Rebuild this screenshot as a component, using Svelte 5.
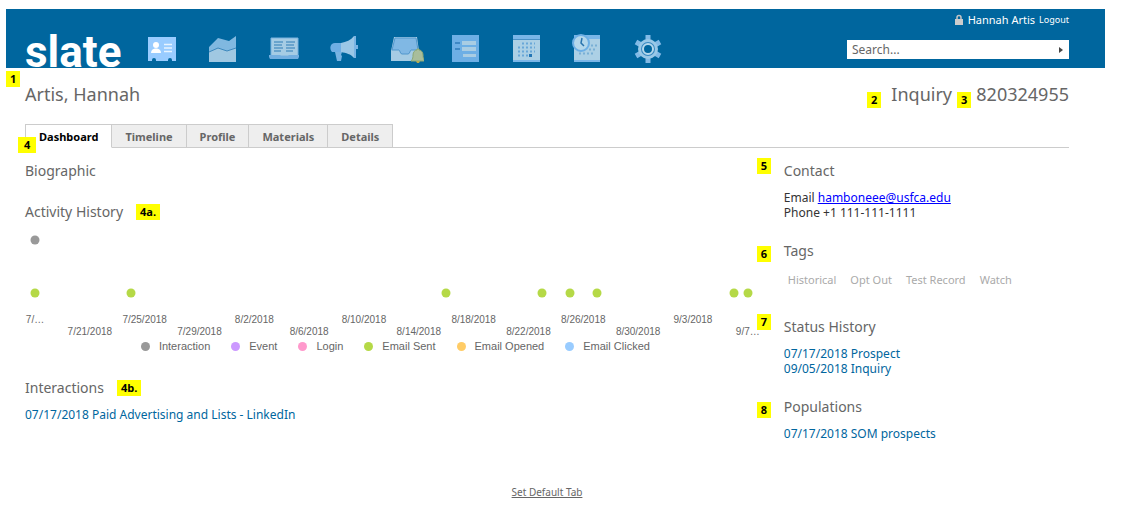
<script lang="ts">
    type Point = {
        day: number;
        color: string;
        row: "upper" | "lower";
    };

    const tabs = ["Dashboard", "Timeline", "Profile", "Materials", "Details"];
    let activeTab = $state("Dashboard");
    let query = $state("");

    // Days are counted from 7/17/2018, the left end of the time axis.
    const lastDay = 52;

    const points: Point[] = [
        { day: 0, color: "#999999", row: "upper" },
        ...[0, 7, 30, 37, 39, 41, 51, 52].map((day) => ({
            day,
            color: "#b5d947",
            row: "lower" as const,
        })),
    ];

    const ticks = [
        "7/…", "7/21/2018", "7/25/2018", "7/29/2018", "8/2/2018",
        "8/6/2018", "8/10/2018", "8/14/2018", "8/18/2018", "8/22/2018",
        "8/26/2018", "8/30/2018", "9/3/2018", "9/7…",
    ];

    const legend = [
        { name: "Interaction", color: "#999999" },
        { name: "Event", color: "#cc99ff" },
        { name: "Login", color: "#ff99cc" },
        { name: "Email Sent", color: "#b5d947" },
        { name: "Email Opened", color: "#ffcc66" },
        { name: "Email Clicked", color: "#99ccff" },
    ];

    const tags = ["Historical", "Opt Out", "Test Record", "Watch"];

    function dayLeft(day: number) {
        return (day / lastDay) * 100;
    }
</script>

<div class="page">
    <header>
        <a class="logo" href="#home">slate</a>
        <nav class="icons" aria-label="Modules">
            <a href="#records" aria-label="Records">
                <svg viewBox="0 0 36 36">
                    <path d="M4 7h28v24h-4v-1a2 2 0 0 0-4 0v1H12v-1a2 2 0 0 0-4 0v1H4z" fill="#99ccff" />
                    <circle cx="12" cy="15" r="3" fill="#fff" />
                    <path d="M7 23c0-3 2-4 4-4.500h2c2 .5 4 1.500 4 4.500z" fill="#fff" />
                    <path d="M20 14.500h8M20 18h8M20 21.500h8" stroke="#e8f4ff" stroke-width="1.500" />
                </svg>
            </a>
            <a href="#reports" aria-label="Reports">
                <svg viewBox="0 0 36 36">
                    <path d="M4 17l9-9 11 3 7-5v26H4z" fill="#80b8e0" />
                    <path d="M4 22l9-4 9 3 9-3v14H4z" fill="#a0c8e2" />
                    <path d="M4 22l9-4 9 3 9-3" fill="none" stroke="#3d88bd" />
                </svg>
            </a>
            <a href="#reader" aria-label="Reader">
                <svg viewBox="0 0 36 36">
                    <path d="M5 8h27v18H5z" fill="#a5cce4" stroke="#79b2df" />
                    <path d="M8 12h9M8 15h8M8 18h9M8 21h7M20 12h9M20 15h8M20 18h9M20 21h7" stroke="#2f7db5" />
                    <path d="M3 25h11l1 1h7l1-1h10v2l-1 2H4l-1-2z" fill="#73afe0" />
                </svg>
            </a>
            <a href="#deliver" aria-label="Deliver">
                <svg viewBox="0 0 36 36">
                    <path d="M14 13c5-1 10-3 13-7h2v22h-2c-3-4-8-5-13-6z" fill="#9bc7e6" />
                    <path d="M28 6v22M30 15v4" stroke="#7ab4e4" stroke-width="2" />
                    <path d="M14 13H8c-5 0-6 6-3 9h9z" fill="#6faee4" />
                    <path d="M8 22h7l-1 3 1 1-1 5h-4z" fill="#78b3e2" />
                </svg>
            </a>
            <a href="#inbox" aria-label="Inbox">
                <svg viewBox="0 0 36 36">
                    <path d="M6 7h23l2 14v10H3V21z" fill="#a5cce4" />
                    <path d="M7 8h21l2 12h-7c-1 0-1 4-3 4h-6c-2 0-2-4-3-4H4z" fill="#80b8e4" stroke="#5197cc" />
                    <path d="M23 31c2-2 2-4 2-6 0-3 2-5 4-5v-1h2v1c2 0 4 2 4 5 0 2 0 4 2 6z" fill="#a8bd9b" stroke="#8da875" />
                    <path d="M28 31h4l-1 2h-2z" fill="#b4ad50" />
                </svg>
            </a>
            <a href="#forms" aria-label="Forms">
                <svg viewBox="0 0 36 36">
                    <path d="M3 5h27v27H3z" fill="#6dafe5" />
                    <path d="M6 13h5M6 19h5" stroke="#2e7cba" stroke-width="1.500" />
                    <path d="M13 11h14v4H13zM13 17h14v4H13zM14 24h13v3H14z" fill="#a9cde3" />
                </svg>
            </a>
            <a href="#events" aria-label="Events">
                <svg viewBox="0 0 36 36">
                    <path d="M3 5h27v27H3z" fill="#acd0e5" />
                    <path d="M3 5h27v5H3zM3 30h27v2H3z" fill="#79b6e8" />
                    <path d="M3 9.500h27" stroke="#4a92c7" />
                    <path d="M12 13.500h13M8 17.500h17M8 21.500h17M8 25.500h13" stroke="#69a7d8" stroke-width="2" stroke-dasharray="2 2" />
                    <path d="M19 24h3v3h-3z" fill="#2376b5" />
                </svg>
            </a>
            <a href="#scheduler" aria-label="Scheduler">
                <svg viewBox="0 0 36 36">
                    <path d="M3 5h26v27H3z" fill="#acd0e5" />
                    <path d="M3 5h26v4H3zM3 30h26v2H3z" fill="#79b6e8" />
                    <path d="M20 15.500h6M18 19.500h8M8 23.500h14" stroke="#79afd5" stroke-width="2" stroke-dasharray="2 2" />
                    <circle cx="10" cy="13" r="8" fill="#b4d7eb" stroke="#6dafe5" stroke-width="2" />
                    <path d="M11 8l-1 5 3 3" fill="none" stroke="#2873ad" stroke-width="1.500" />
                </svg>
            </a>
            <a href="#settings" aria-label="Settings">
                <svg viewBox="0 0 36 36">
                    <g stroke="#82bae6" stroke-width="5">
                        <path d="M16 5v28M4 12l24 14M28 12L4 26" />
                    </g>
                    <circle cx="16" cy="19" r="10" fill="#99c8e7" />
                    <circle cx="16" cy="19" r="6" fill="#00669e" stroke="#3788c0" stroke-width="2" />
                    <circle cx="16" cy="19" r="5" fill="#00669e" stroke="#b5d8ec" stroke-width="2" />
                </svg>
            </a>
        </nav>
        <div class="account">
            <div class="user">
                <svg class="lock" viewBox="0 0 10 12">
                    <path d="M3 6V3.500a2 2 0 0 1 4 0V6" fill="none" stroke="#c5c5c5" stroke-width="1.500" />
                    <path d="M1 5h8v6H1z" fill="#ccc" />
                </svg>
                <span>Hannah Artis</span>
                <a href="#logout">Logout</a>
            </div>
            <form class="search" onsubmit={(e) => e.preventDefault()}>
                <input type="text" placeholder="Search..." aria-label="Search" bind:value={query} />
                <button aria-label="Go">
                    <svg viewBox="0 0 6 8"><path d="M1 1l4 3-4 3z" fill="#444" /></svg>
                </button>
            </form>
        </div>
    </header>

    <div class="content">
        <div class="title">
            <span class="note over-title">1</span>
            <h1>Artis, Hannah</h1>
            <span class="note type-note">2</span>
            <span class="value">Inquiry</span>
            <span class="note">3</span>
            <span class="value">820324955</span>
        </div>

        <nav class="tabs" aria-label="Record">
            {#each tabs as tab}
                <button class:active={tab == activeTab} onclick={() => (activeTab = tab)}>{tab}</button>
            {/each}
            <span class="note over-tabs">4</span>
        </nav>

        <div class="columns">
            <main>
                <section>
                    <h2>Biographic</h2>
                </section>
                <section>
                    <h2>Activity History <span class="note">4a.</span></h2>
                    <div class="chart">
                        <div class="plot">
                            {#each points as point}
                                <i class="dot {point.row}" style="left: {dayLeft(point.day)}%; background: {point.color};"></i>
                            {/each}
                            {#each ticks as tick, i}
                                <span class="tick" class:second={i % 2 == 1} style="left: {dayLeft(i * 4)}%;">{tick}</span>
                            {/each}
                        </div>
                        <div class="legend">
                            {#each legend as entry}
                                <span class="entry"><i class="dot" style="background: {entry.color};"></i>{entry.name}</span>
                            {/each}
                        </div>
                    </div>
                </section>
                <section>
                    <h2>Interactions <span class="note">4b.</span></h2>
                    <div class="lines">
                        <a href="#interaction">07/17/2018 Paid Advertising and Lists - LinkedIn</a>
                    </div>
                </section>
            </main>

            <aside>
                <section>
                    <span class="note above">5</span>
                    <h2>Contact</h2>
                    <div class="lines">
                        <div>Email <a class="mail" href="mailto:hamboneee@usfca.edu">hamboneee@usfca.edu</a></div>
                        <div>Phone +1 111-111-1111</div>
                    </div>
                </section>
                <section>
                    <span class="note below">6</span>
                    <h2>Tags</h2>
                    <div class="tags">
                        {#each tags as tag}
                            <span>{tag}</span>
                        {/each}
                    </div>
                </section>
                <section>
                    <span class="note above">7</span>
                    <h2>Status History</h2>
                    <div class="lines">
                        <a href="#prospect">07/17/2018 Prospect</a>
                        <a href="#inquiry">09/05/2018 Inquiry</a>
                    </div>
                </section>
                <section>
                    <span class="note below">8</span>
                    <h2>Populations</h2>
                    <div class="lines">
                        <a href="#som">07/17/2018 SOM prospects</a>
                    </div>
                </section>
            </aside>
        </div>

        <footer><a href="#default-tab">Set Default Tab</a></footer>
    </div>
</div>

<style>
    :global(body) {
        background: #fff;
    }
    .page {
        padding: 9px 42px 0 6px;
        font-family: "Noto Sans", "Open Sans", sans-serif;
        font-size: 12px;
        line-height: 15px;
        color: #333;
    }
    a {
        color: #00669e;
        text-decoration: none;
    }
    button, input {
        font: inherit;
    }

    header {
        display: flex;
        align-items: flex-end;
        height: 59px;
        padding: 0 36px 0 19px;
        background: #00669e;
    }
    .logo {
        width: 97px;
        margin-right: 22px;
        color: #fff;
        font-family: Roboto, "Open Sans", sans-serif;
        font-size: 44px;
        font-weight: bold;
        line-height: 32px;
    }
    .icons {
        display: flex;
        gap: 25px;
        padding-bottom: 2px;
    }
    .icons svg {
        display: block;
        width: 36px;
        height: 36px;
    }
    .account {
        width: 222px;
        margin-left: auto;
        padding-bottom: 9px;
    }
    .user {
        display: flex;
        justify-content: flex-end;
        align-items: center;
        gap: 4px;
        margin-bottom: 13px;
        color: #fff;
        font-size: 11px;
    }
    .user a {
        color: #fff;
        font-size: 9px;
    }
    .lock {
        width: 10px;
        height: 12px;
    }
    .search {
        display: flex;
        height: 19px;
        background: #fff;
    }
    .search input {
        flex: 1;
        min-width: 0;
        padding: 0 5px;
        border: 0;
        outline: 0;
        background: none;
    }
    .search input::placeholder {
        color: #666;
        opacity: 1;
    }
    .search button {
        padding: 0 5px;
        border: 0;
        background: none;
    }
    .search svg {
        display: block;
        width: 6px;
        height: 8px;
    }

    .content {
        padding: 12px 36px 0 19px;
    }
    .title {
        position: relative;
        display: flex;
        align-items: flex-end;
        gap: 5px;
        margin-bottom: 16px;
        color: #666;
        font-size: 18px;
        line-height: 28px;
    }
    h1 {
        margin: 0 auto 0 0;
        font-size: 18px;
        font-weight: normal;
        line-height: 28px;
    }
    h2 {
        display: flex;
        align-items: center;
        gap: 13px;
        margin: 0;
        color: #666;
        font-size: 14px;
        font-weight: normal;
        line-height: 20px;
    }
    .note {
        padding: 0 4px;
        background: #ff0;
        color: #000;
        font-family: "Open Sans", sans-serif;
        font-size: 11px;
        font-weight: bold;
        line-height: 16px;
    }
    .type-note {
        margin-right: 5px;
    }
    .over-title {
        position: absolute;
        left: -19px;
        top: -9px;
    }
    .over-tabs {
        position: absolute;
        left: -7px;
        top: 13px;
        padding: 0 6px;
    }

    .tabs {
        position: relative;
        display: flex;
        border-bottom: 1px solid #ccc;
    }
    .tabs button {
        height: 24px;
        margin-bottom: -1px;
        padding: 0 13px;
        border: 1px solid #ccc;
        border-left-width: 0;
        background: #eee;
        color: #666;
        font-size: 11px;
        font-weight: bold;
    }
    .tabs button:first-child {
        border-left-width: 1px;
    }
    .tabs button.active {
        border-bottom-color: #fff;
        background: #fff;
        color: #000;
    }

    .columns {
        display: grid;
        grid-template-columns: 7fr 3fr;
        padding-top: 13px;
    }
    main, aside {
        display: flex;
        flex-direction: column;
        gap: 21px;
        min-width: 0;
    }
    aside section {
        position: relative;
        padding-left: 28px;
    }
    .above, .below {
        position: absolute;
        left: 1px;
    }
    .above {
        top: -3px;
    }
    .below {
        top: 5px;
    }
    .lines {
        display: flex;
        flex-direction: column;
        align-items: flex-start;
        padding-top: 9px;
    }
    .mail {
        color: #00f;
        text-decoration: underline;
    }
    .tags {
        display: flex;
        gap: 14px;
        padding: 9px 0 6px 4px;
        color: #aaa;
        font-size: 11px;
        line-height: 20px;
    }

    .chart {
        color: #666;
        font-family: "Liberation Sans", sans-serif;
        font-size: 11px;
    }
    .plot {
        position: relative;
        height: 117px;
        margin: 0 8px 0 10px;
    }
    .dot {
        width: 9px;
        height: 9px;
        border-radius: 50%;
    }
    .plot .dot {
        position: absolute;
        transform: translate(-50%, -50%);
    }
    .upper {
        top: 18px;
    }
    .lower {
        top: 71px;
    }
    .tick {
        position: absolute;
        top: 92px;
        transform: translateX(-50%);
        font-size: 10px;
        line-height: 12px;
    }
    .tick.second {
        top: 104px;
    }
    .legend {
        display: flex;
        justify-content: center;
        gap: 21px;
        height: 18px;
        padding-left: 10px;
    }
    .entry {
        display: flex;
        align-items: center;
        gap: 9px;
        height: 14px;
    }

    footer {
        padding-top: 44px;
        text-align: center;
        font-size: 10px;
    }
    footer a {
        color: #666;
        text-decoration: underline;
    }
</style>
